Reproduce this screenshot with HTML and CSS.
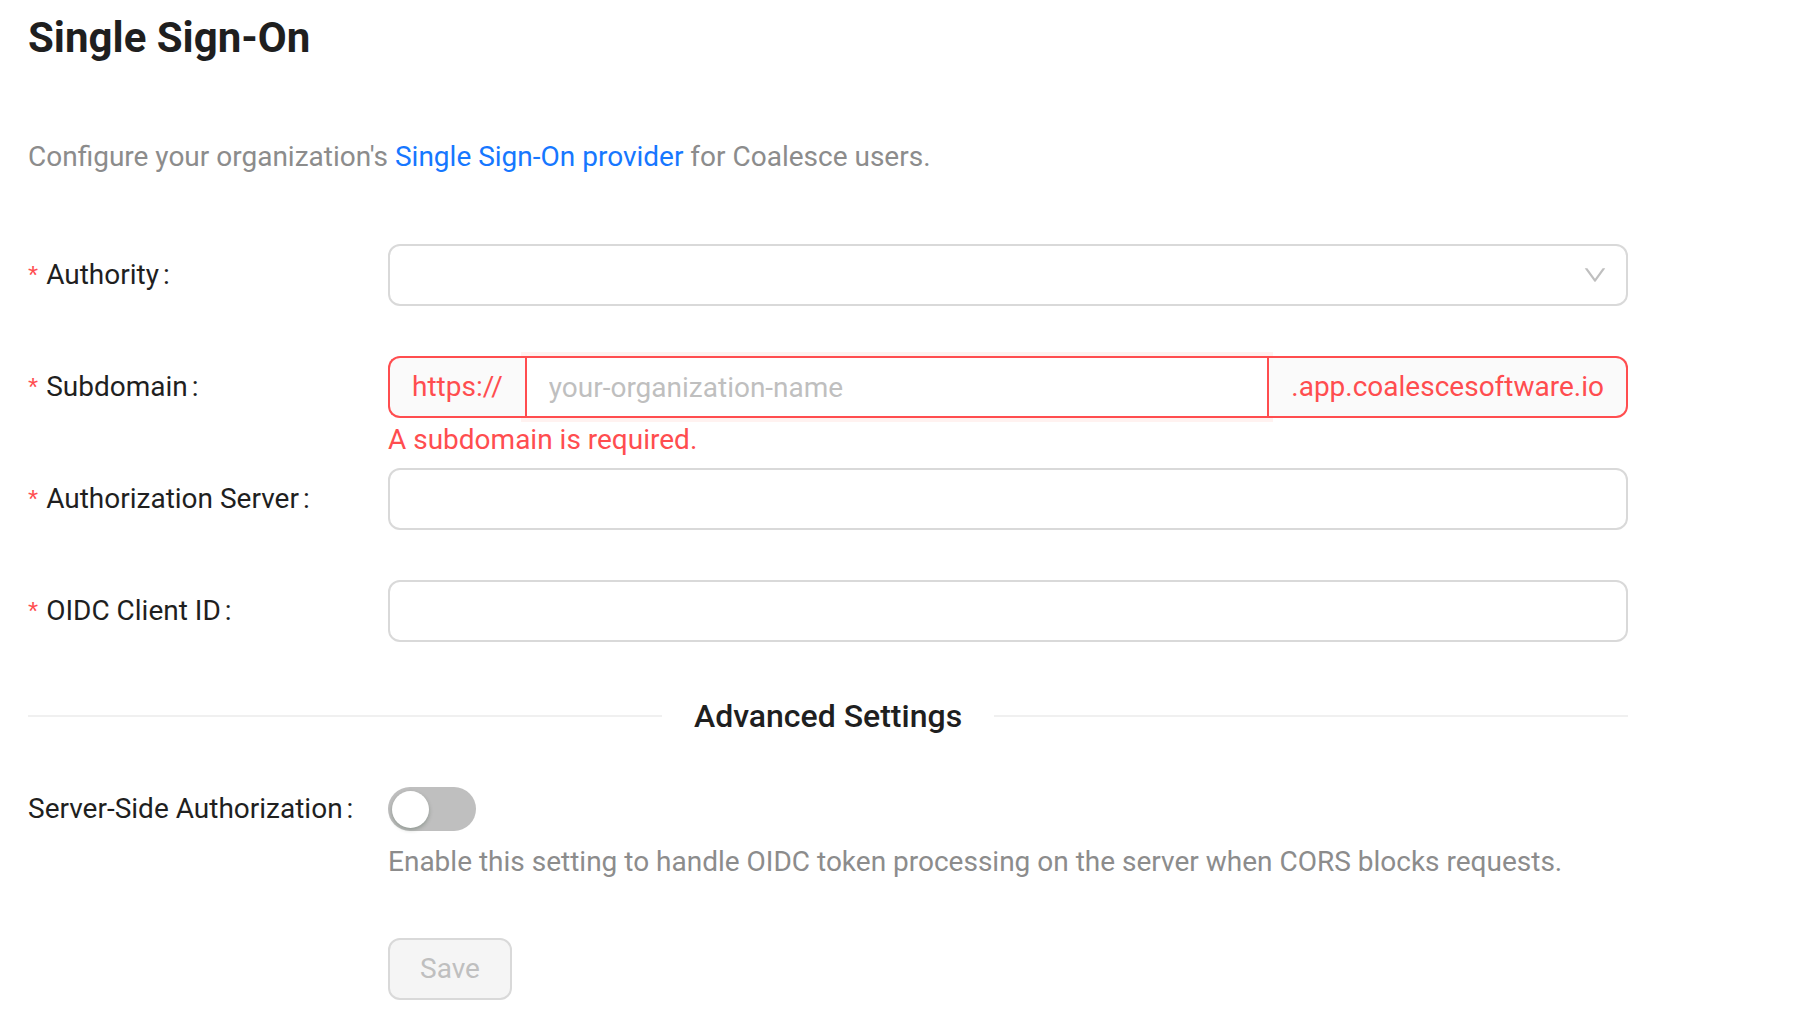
FILE: index.html
```html
<!DOCTYPE html>
<html lang="en">
<head>
<meta charset="utf-8">
<title>Single Sign-On</title>
<link rel="stylesheet" href="styles.css">
</head>
<body>
<div class="page">
  <h1 class="title">Single Sign-On</h1>
  <p class="desc">Configure your organization's <a class="link" href="#">Single Sign-On provider</a> for Coalesce users.</p>

  <form class="form">
    <div class="item">
      <div class="label"><span class="req">*</span>Authority<span class="colon">:</span></div>
      <div class="control">
        <div class="select">
          <svg class="chev" viewBox="64 64 896 896" width="24" height="24" fill="#bfbfbf" aria-hidden="true"><path d="M884 256h-75c-5.1 0-9.900 2.5-12.9 6.6L512 654.2 227.9 262.6c-3-4.1-7.8-6.6-12.9-6.6h-75c-6.5 0-10.3 7.4-6.5 12.7l352.6 486.1c12.8 17.6 39 17.6 51.7 0l352.6-486.1c3.9-5.3.1-12.7-6.4-12.7z"/></svg>
        </div>
      </div>
    </div>

    <div class="item item-error">
      <div class="label"><span class="req">*</span>Subdomain<span class="colon">:</span></div>
      <div class="control">
        <div class="group">
          <span class="addon addon-before">https://</span>
          <input class="group-input" type="text" placeholder="your-organization-name">
          <span class="addon addon-after">.app.coalescesoftware.io</span>
        </div>
        <div class="explain">A subdomain is required.</div>
      </div>
    </div>

    <div class="item">
      <div class="label"><span class="req">*</span>Authorization Server<span class="colon">:</span></div>
      <div class="control">
        <input class="input" type="text">
      </div>
    </div>

    <div class="item item-last">
      <div class="label"><span class="req">*</span>OIDC Client ID<span class="colon">:</span></div>
      <div class="control">
        <input class="input" type="text">
      </div>
    </div>
  </form>

  <div class="divider"><span class="divider-text">Advanced Settings</span></div>

  <div class="item item-switch">
    <div class="label label-switch">Server-Side Authorization<span class="colon">:</span></div>
    <div class="control">
      <div class="switch" role="switch" aria-checked="false"><span class="handle"></span></div>
      <div class="extra">Enable this setting to handle OIDC token processing on the server when CORS blocks requests.</div>
      <button class="btn" type="button" disabled>Save</button>
    </div>
  </div>
</div>
</body>
</html>
```

FILE: styles.css
```css
* {
  box-sizing: border-box;
}

html, body {
  margin: 0;
  padding: 0;
  background: #ffffff;
}

body {
  font-family: Roboto, "Liberation Sans", Arial, sans-serif;
  font-size: 28px;
  line-height: 44px;
  color: #1f1f1f;
}

.page {
  width: 1628px;
  padding: 12px 0 0 28px;
}

.title {
  margin: 0;
  font-size: 42px;
  line-height: 52px;
  font-weight: 700;
  color: #1f1f1f;
}

.desc {
  margin: 71px 0 0;
  color: #8c8c8c;
}

.link {
  color: #1677ff;
  text-decoration: none;
}

.form {
  margin: 65px 0 0;
}

.item {
  display: grid;
  grid-template-columns: 360px 1fr;
  margin-bottom: 50px;
}

.item-error {
  margin-bottom: 0;
}

.item-last {
  margin-bottom: 0;
}

.label {
  height: 62px;
  display: flex;
  align-items: center;
  white-space: nowrap;
  color: #1f1f1f;
}

.req {
  font-family: "Liberation Sans", Arial, sans-serif;
  font-size: 26px;
  color: #ff4d4f;
  margin-right: 8px;
  line-height: 44px;
}

.colon {
  margin-left: 4px;
}

.control {
  min-width: 0;
}

.select,
.input {
  width: 100%;
  height: 62px;
  border: 2px solid #d9d9d9;
  border-radius: 12px;
  background: #ffffff;
}

.select {
  display: flex;
  align-items: center;
  justify-content: flex-end;
  padding-right: 19px;
}

.chev {
  display: block;
}

.input {
  display: block;
  padding: 0 22px;
  font: inherit;
  color: #1f1f1f;
  outline: none;
}

.group {
  display: flex;
  height: 62px;
}

.addon {
  position: relative;
  z-index: 1;
  display: flex;
  align-items: center;
  background: #fafafa;
  color: #ff4d4f;
  border: 2px solid #ff4d4f;
  white-space: nowrap;
}

.addon-before {
  padding: 0 22px;
  border-right: 0;
  border-radius: 12px 0 0 12px;
}

.addon-after {
  padding: 0 22px;
  border-left: 0;
  border-radius: 0 12px 12px 0;
}

.group-input {
  flex: 1;
  min-width: 0;
  height: 62px;
  padding: 0 22px;
  border: 2px solid #ff4d4f;
  border-radius: 0;
  font: inherit;
  color: #1f1f1f;
  background: #ffffff;
  outline: none;
  box-shadow: 0 0 0 4px rgba(255, 38, 5, 0.06);
}

.group-input::placeholder {
  color: #bfbfbf;
  opacity: 1;
}

.explain {
  height: 50px;
  color: #ff4d4f;
}

.divider {
  display: flex;
  align-items: center;
  height: 44px;
  margin-top: 52px;
}

.divider::before,
.divider::after {
  content: "";
  flex: 1;
  border-top: 2px solid #f0f0f0;
}

.divider-text {
  padding: 0 32px;
  font-size: 32px;
  font-weight: 500;
  color: #1f1f1f;
  white-space: nowrap;
}

.item-switch {
  margin-top: 49px;
  margin-bottom: 0;
}

.label-switch {
  height: 44px;
}

.switch {
  width: 88px;
  height: 44px;
  border-radius: 22px;
  background: #bfbfbf;
  padding: 3.5px 4px;
}

.handle {
  display: block;
  width: 37px;
  height: 37px;
  border-radius: 50%;
  background: #ffffff;
  box-shadow: 0 2px 4px rgba(0, 35, 11, 0.25);
}

.extra {
  margin-top: 9px;
  color: #8c8c8c;
  white-space: nowrap;
}

.btn {
  display: block;
  margin-top: 54px;
  width: 124px;
  height: 62px;
  padding: 0;
  border: 2px solid #d9d9d9;
  border-radius: 12px;
  background: #f5f5f5;
  color: #bfbfbf;
  font: inherit;
  cursor: not-allowed;
}
```
